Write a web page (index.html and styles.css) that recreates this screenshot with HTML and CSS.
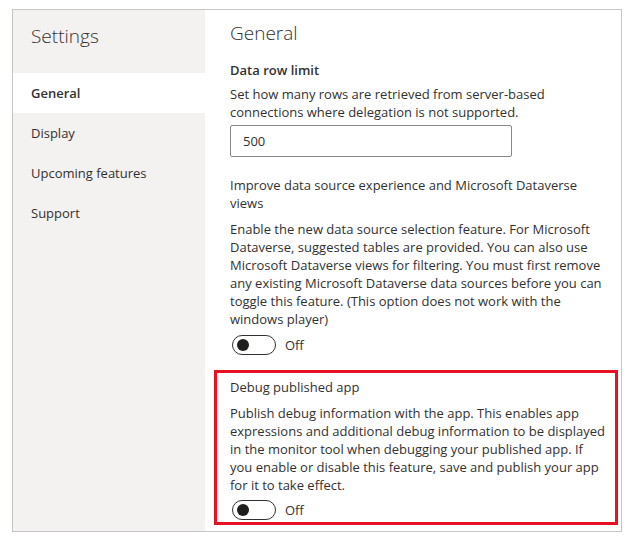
FILE: index.html
```html
<!DOCTYPE html>
<html lang="en">
<head>
<meta charset="utf-8">
<title>Settings</title>
<link rel="stylesheet" href="styles.css">
</head>
<body>
<div class="frame">
  <aside class="sidebar">
    <div class="sidebar-title">Settings</div>
    <nav class="nav">
      <div class="nav-item active">General</div>
      <div class="nav-item">Display</div>
      <div class="nav-item">Upcoming features</div>
      <div class="nav-item">Support</div>
    </nav>
  </aside>
  <main class="content">
    <h1 class="page-title">General</h1>

    <section class="setting">
      <div class="label bold">Data row limit</div>
      <p class="desc">Set how many rows are retrieved from server-based<br>connections where delegation is not supported.</p>
      <div class="input">500</div>
    </section>

    <section class="setting setting-gap">
      <div class="label">Improve data source experience and Microsoft Dataverse<br>views</div>
      <p class="desc desc-gap">Enable the new data source selection feature. For Microsoft<br>Dataverse, suggested tables are provided. You can also use<br>Microsoft Dataverse views for filtering. You must first remove<br>any existing Microsoft Dataverse data sources before you can<br>toggle this feature. (This option does not work with the<br>windows player)</p>
      <div class="toggle-row">
        <span class="toggle"><span class="knob"></span></span>
        <span class="toggle-label">Off</span>
      </div>
    </section>

    <section class="setting highlight">
      <div class="label">Debug published app</div>
      <p class="desc desc-gap">Publish debug information with the app. This enables app<br>expressions and additional debug information to be displayed<br>in the monitor tool when debugging your published app. If<br>you enable or disable this feature, save and publish your app<br>for it to take effect.</p>
      <div class="toggle-row">
        <span class="toggle"><span class="knob"></span></span>
        <span class="toggle-label">Off</span>
      </div>
    </section>
  </main>
</div>
</body>
</html>
```
FILE: styles.css
```css
* { box-sizing: border-box; }
html, body {
  margin: 0;
  padding: 0;
  background: #ffffff;
}
body {
  font-family: "Open Sans", "Noto Sans", sans-serif;
  font-size: 13px;
  color: #323130;
}
.frame {
  margin: 9px 0 0 12px;
  width: 610px;
  height: 523px;
  border: 1px solid #c8c6c4;
  display: flex;
  overflow: hidden;
}
.sidebar {
  width: 192px;
  flex: none;
  background: #f3f2f1;
  padding-top: 12px;
}
.sidebar-title {
  font-size: 19px;
  font-weight: 300;
  line-height: 28px;
  padding-left: 18px;
  margin-bottom: 23px;
}
.nav-item {
  height: 40px;
  line-height: 40px;
  padding-left: 18px;
  white-space: nowrap;
}
.nav-item.active {
  background: #ffffff;
  font-weight: 600;
}
.content {
  flex: 1;
  padding: 9px 3px 0 25px;
  white-space: nowrap;
}
.page-title {
  margin: 0;
  font-size: 19px;
  font-weight: 300;
  line-height: 28px;
}
.setting { margin-top: 14px; }
.setting-gap { margin-top: 19px; }
.label {
  line-height: 18px;
}
.bold { font-weight: 600; }
.desc {
  margin: 6px 0 0;
  line-height: 18px;
}
.desc-gap { margin-top: 8px; }
.input {
  margin-top: 4px;
  width: 282px;
  height: 32px;
  border: 1px solid #8a8886;
  border-radius: 2px;
  padding-left: 12px;
  line-height: 30px;
}
.toggle-row {
  margin-top: 7px;
  display: flex;
  align-items: center;
  height: 20px;
  padding-left: 2px;
}
.toggle {
  width: 44px;
  height: 20px;
  border: 1px solid #323130;
  border-radius: 10px;
  display: flex;
  align-items: center;
  padding-left: 4px;
}
.knob {
  width: 12px;
  height: 12px;
  border-radius: 50%;
  background: #201f1e;
}
.toggle-label {
  margin-left: 9px;
}
.highlight {
  margin-top: 15px;
  margin-left: -16px;
  border: 3px solid #e81123;
  padding: 5px 3px 2px 13px;
}
.highlight .toggle-row { margin-top: 6px; }
```
